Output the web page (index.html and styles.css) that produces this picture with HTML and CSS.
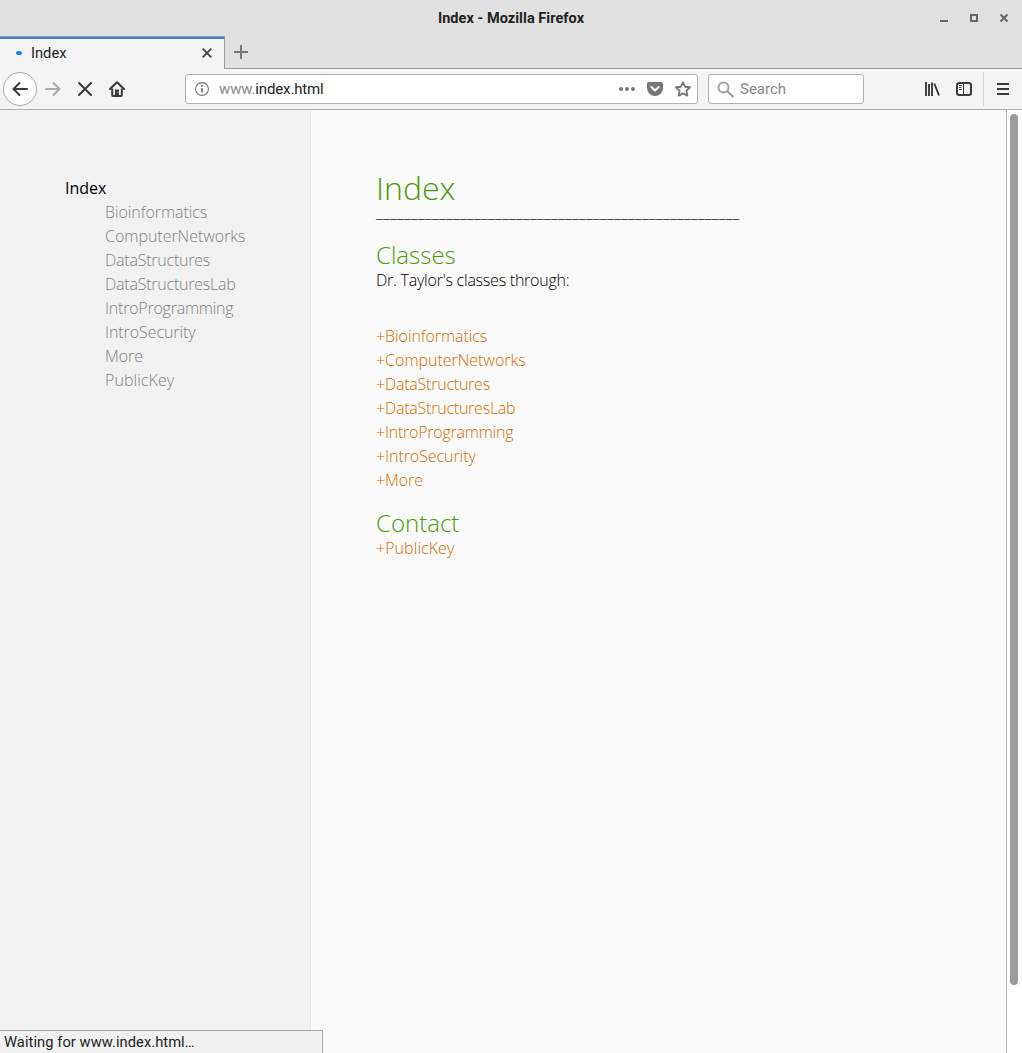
FILE: index.html
```html
<!DOCTYPE html>
<html lang="en">
<head>
<meta charset="utf-8">
<title>Index</title>
<link rel="stylesheet" href="styles.css">
</head>
<body>
<div class="window">
  <header class="titlebar">
    <span class="title">Index - Mozilla Firefox</span>
    <div class="controls">
      <svg width="10" height="10" viewBox="0 0 10 10"><path d="M1 8h8" stroke="#666" stroke-width="2"/></svg>
      <svg width="10" height="10" viewBox="0 0 10 10"><rect x="2" y="2" width="6" height="6" fill="none" stroke="#666" stroke-width="2"/></svg>
      <svg width="10" height="10" viewBox="0 0 10 10"><path d="M1.500 1.500l7 7M8.500 1.500l-7 7" stroke="#666" stroke-width="2"/></svg>
    </div>
  </header>
  <div class="tabs">
    <div class="tab">
      <span class="loader"></span>
      <span class="tab-name">Index</span>
      <svg width="10" height="10" viewBox="0 0 10 10"><path d="M.7.7l8.600 8.600M9.300.7L.7 9.300" stroke="#444" stroke-width="1.800"/></svg>
    </div>
    <div class="strip"><svg width="14" height="14" viewBox="0 0 14 14"><path d="M7 0v14M0 7h14" stroke="#777" stroke-width="2"/></svg></div>
  </div>
  <nav class="toolbar">
    <span class="back"><svg width="16" height="16" viewBox="0 0 16 16"><path d="M15 8H1.500M7.500 2l-6 6 6 6" fill="none" stroke="#3a3a3a" stroke-width="2" stroke-linecap="round" stroke-linejoin="round"/></svg></span>
    <svg class="forward" width="16" height="16" viewBox="0 0 16 16"><path d="M1 8h13.500M8.500 2l6 6-6 6" fill="none" stroke="#aaa" stroke-width="2" stroke-linecap="round" stroke-linejoin="round"/></svg>
    <svg class="stop" width="16" height="16" viewBox="0 0 16 16"><path d="M2 2l12 12M14 2L2 14" stroke="#3a3a3a" stroke-width="2" stroke-linecap="round"/></svg>
    <svg class="home" width="16" height="16" viewBox="0 0 16 16"><path d="M1 8l7-6.700L15 8" fill="none" stroke="#3a3a3a" stroke-width="2" stroke-linecap="round" stroke-linejoin="round"/><path d="M3.200 7.500v6.700q0 .8.800.8h8q.8 0 .8-.8V7.500" fill="none" stroke="#3a3a3a" stroke-width="2"/><path d="M6 15.500V8.500h4v7z" fill="#3a3a3a"/><path d="M8.500 11.200h1" stroke="#f3f3f3"/></svg>
    <div class="urlbar">
      <svg width="14" height="14" viewBox="0 0 14 14"><circle cx="7" cy="7" r="6.400" fill="none" stroke="#777" stroke-width="1.100"/><path d="M7 6v4.500M7 3v1.700" stroke="#777" stroke-width="1.700"/></svg>
      <span class="url"><span class="sub">www.</span>index.html</span>
      <svg width="16" height="16" viewBox="0 0 16 16"><g fill="#777"><circle cx="2" cy="8" r="2"/><circle cx="8" cy="8" r="2"/><circle cx="14" cy="8" r="2"/></g></svg>
      <svg width="16" height="16" viewBox="0 0 16 16"><path d="M1.500 1h13Q16 1 16 2.500V7A8 8 0 0 1 0 7V2.500Q0 1 1.500 1z" fill="#777"/><path d="M4.300 6L8 9.500 11.700 6" fill="none" stroke="#fff" stroke-width="2" stroke-linecap="round" stroke-linejoin="round"/></svg>
      <svg width="16" height="16" viewBox="0 0 16 16"><path d="M8 1.300l2.100 4.400 4.900.6-3.600 3.400.9 4.900L8 12.300l-4.300 2.300.9-4.900L1 6.300l4.900-.6z" fill="none" stroke="#777" stroke-width="1.900" stroke-linejoin="round"/></svg>
    </div>
    <div class="search">
      <svg width="17" height="17" viewBox="0 0 17 17"><circle cx="6.500" cy="6.500" r="5" fill="none" stroke="#a0a0a0" stroke-width="2"/><path d="M10.300 10.300l5.500 5.200" stroke="#a0a0a0" stroke-width="2.200" stroke-linecap="round"/></svg>
      <span>Search</span>
    </div>
    <div class="tools">
      <svg width="16" height="16" viewBox="0 0 16 16"><path d="M2 1v14M5 3v12M8 1.500V15M10.300 2.500L15 14.500" stroke="#3a3a3a" stroke-width="1.900"/></svg>
      <svg width="16" height="16" viewBox="0 0 16 16"><rect x="1" y="2" width="14" height="12" rx="2.200" fill="none" stroke="#3a3a3a" stroke-width="2"/><path d="M7.500 2v12" stroke="#3a3a3a"/><path d="M3 4.500h3M3 6.500h2.500M3 8.500h3" stroke="#3a3a3a"/></svg>
    </div>
    <div class="menu"><svg width="12" height="12" viewBox="0 0 12 12"><path d="M0 1h12M0 6h12M0 11h12" stroke="#3a3a3a" stroke-width="2"/></svg></div>
  </nav>
  <div class="viewport">
    <aside class="sidebar">
      <div class="current">Index</div>
      <ul class="side-list">
        <li>Bioinformatics</li>
        <li class="even">ComputerNetworks</li>
        <li class="tight">DataStructures</li>
        <li class="tight">DataStructuresLab</li>
        <li class="tight">IntroProgramming</li>
        <li>IntroSecurity</li>
        <li>More</li>
        <li class="loose">PublicKey</li>
      </ul>
    </aside>
    <main class="content">
      <h1>Index</h1>
      <div class="rule">____________________________________________________</div>
      <h2>Classes</h2>
      <p class="tight">Dr. Taylor's classes through:</p>
      <ul class="links">
        <li>+Bioinformatics</li>
        <li class="even">+ComputerNetworks</li>
        <li class="tight">+DataStructures</li>
        <li class="tight">+DataStructuresLab</li>
        <li class="tight">+IntroProgramming</li>
        <li>+IntroSecurity</li>
        <li>+More</li>
      </ul>
      <h2 class="contact">Contact</h2>
      <ul class="links-contact"><li class="loose">+PublicKey</li></ul>
    </main>
    <div class="scrollbar"><div class="thumb"></div></div>
    <div class="status">Waiting for www.index.html…</div>
  </div>
</div>
</body>
</html>
```
FILE: styles.css
```css
* { box-sizing: border-box; }
body { margin: 0; font-family: Roboto, sans-serif; font-size: 15px; color: #222; }
svg { display: block; flex: none; }
.window { display: flex; flex-direction: column; width: 1022px; height: 1053px; background: #e0e0e0; overflow: hidden; }
.titlebar { display: grid; grid-template-columns: 1fr auto 1fr; align-items: center; height: 36px; flex: none; }
.title { grid-column: 2; padding-top: 1px; font-weight: 700; font-size: 14.5px; line-height: 20px; letter-spacing: 0.05px; }
.controls { display: flex; justify-content: flex-end; gap: 20px; padding-right: 13px; }
.tabs { display: flex; height: 33px; flex: none; }
.tab { display: flex; align-items: center; width: 225px; padding: 0 12px 0 16px; background: #f4f4f4; border-top: 1px solid #999; border-right: 1px solid #999; box-shadow: inset 0 2px #3b7ded; }
.loader { width: 6px; height: 4px; border-radius: 50%; background: #0a84ff; }
.tab-name { flex: 1; margin-left: 9px; font-size: 14.7px; }
.strip { display: flex; flex: 1; padding: 9px; border-bottom: 1px solid #999; }
.toolbar { display: flex; align-items: center; height: 41px; flex: none; padding-left: 3px; background: #f4f4f4; border-bottom: 1px solid #b0b0b0; }
.back { display: flex; align-items: center; justify-content: center; width: 34px; height: 34px; border: 1px solid #aaa; border-radius: 50%; background: #fdfdfd; }
.forward { margin-left: 8px; }
.stop, .home { margin-left: 16px; }
.urlbar { display: flex; align-items: center; width: 513px; height: 30px; margin-left: 60px; padding: 0 6px 0 9px; gap: 12px; background: #fff; border: 1px solid #b0b0b0; border-radius: 3px; }
.url { flex: 1; margin-left: -2px; letter-spacing: -0.14px; }
.sub { color: #888; }
.search { display: flex; align-items: center; width: 156px; height: 30px; margin-left: 10px; padding-left: 8px; gap: 6px; background: #fff; border: 1px solid #b0b0b0; border-radius: 3px; color: #888; }
.tools { display: flex; flex: 1; justify-content: flex-end; gap: 16px; padding-right: 11px; }
.menu { display: flex; align-items: center; justify-content: center; width: 39px; height: 34px; border-left: 1px solid #d6d6d6; }
.viewport { position: relative; display: flex; flex: 1; font: 300 16px/24px "Open Sans", sans-serif; background: #fafafa; }
.sidebar { width: 311px; padding: 66px 0 0 65px; background: #f2f2f2; border-right: 1px solid #e8e8e8; }
.current { color: #000; font-weight: 400; }
ul { margin: 0; padding: 0; list-style: none; }
li { letter-spacing: -0.07px; }
.even { letter-spacing: -0.02px; }
.tight { letter-spacing: -0.23px; }
.loose { letter-spacing: 0.06px; }
.side-list { padding-left: 40px; color: #808080; }
.content { flex: 1; padding: 57px 0 0 65px; }
h1, h2, p { margin: 0; font-weight: 300; }
p { color: #000; }
h1 { color: #4e9a06; font-size: 32px; line-height: 42px; }
.rule { height: 24px; margin-top: -9px; letter-spacing: 0.427px; color: #000; }
h2 { margin-top: 18px; color: #4e9a06; font-size: 24px; line-height: 26px; }
.links { margin-top: 32px; }
.links, .links-contact { color: #d46a00; }
h2.contact { margin-top: 18px; }
.scrollbar { width: 16px; padding: 4px 3px; background: #fff; border-left: 1px solid #b8b8b8; }
.thumb { width: 8px; height: 871px; border-radius: 4px; background: #9b9b9b; }
.status { position: absolute; left: 0; bottom: 0; width: 323px; height: 23px; padding: 1px 0 0 4px; font: 14.7px/21px Roboto, sans-serif; letter-spacing: 0.06px; background: #f1f1f1; border: solid #aaa; border-width: 1px 1px 0 0; }
```
